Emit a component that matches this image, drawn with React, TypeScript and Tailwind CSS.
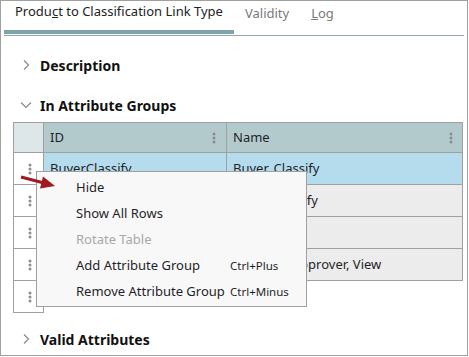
import React from "react"

const font = { fontFamily: '"Noto Sans", "Open Sans", sans-serif' }

function Dots() {
  return (
    <svg width="4" height="12" viewBox="0 0 4 12">
      <circle cx="2" cy="2" r="1.5" fill="#8c8c8c" />
      <circle cx="2" cy="6" r="1.5" fill="#8c8c8c" />
      <circle cx="2" cy="10" r="1.5" fill="#8c8c8c" />
    </svg>
  )
}

function ChevronRight() {
  return (
    <svg width="8" height="12" viewBox="0 0 8 12">
      <path d="M2 1.5 L6.5 6 L2 10.5" stroke="#8a8a8a" strokeWidth="1.2" fill="none" />
    </svg>
  )
}

function ChevronDown() {
  return (
    <svg width="12" height="8" viewBox="0 0 12 8">
      <path d="M1 1.5 L6 6.5 L11 1.5" stroke="#8a8a8a" strokeWidth="1.2" fill="none" />
    </svg>
  )
}

const rows = [
  { id: "BuyerClassify", name: "Buyer, Classify", selected: true },
  { id: "OwnerClassify", name: "Buyer Classify", selected: false },
  { id: "BuyerView", name: "Buyer, View", selected: false },
  { id: "CategoryApproverView", name: "Category Approver, View", selected: false },
]

const menu = [
  { label: "Hide" },
  { label: "Show All Rows" },
  { label: "Rotate Table", disabled: true },
  { label: "Add Attribute Group", shortcut: "Ctrl+Plus" },
  { label: "Remove Attribute Group", shortcut: "Ctrl+Minus" },
]

export default function App() {
  return (
    <div className="h-[357px] w-[469px] bg-white" style={font}>
      <div className="h-[356px] w-[468px] border border-[#a0a0a0] text-[13px]">
        {/* tabs */}
        <div className="mx-[3px] flex border-b border-[#8aa9b0] pb-px">
          <div className="flex h-[33px] items-center border-b-4 border-[#7fa3ab] px-[11px] pb-[7px] text-[#222]">
            <span>
              Produ<span className="underline">c</span>t to Classification Link Type
            </span>
          </div>
          <div className="flex h-[33px] items-center px-[11px] pb-[7px] text-[#7a7a7a]">Validity</div>
          <div className="flex h-[33px] items-center px-[11px] pb-[7px] text-[#7a7a7a]">
            <span>
              <span className="underline">L</span>og
            </span>
          </div>
        </div>

        {/* sections */}
        <div className="flex flex-col">
          <div className="mt-[19px] flex h-[20px] items-center">
            <div className="flex w-[39px] justify-end pr-[10px]">
              <ChevronRight />
            </div>
            <span className="text-[14px] font-bold text-[#111]">Description</span>
          </div>

          <div className="mt-[20px] flex h-[20px] items-center">
            <div className="flex w-[39px] justify-end pr-[8px]">
              <ChevronDown />
            </div>
            <span className="text-[14px] font-bold text-[#111]">In Attribute Groups</span>
          </div>

          {/* table */}
          <div className="relative ml-[12px] mt-[7px] flex items-start">
            <div className="flex w-[31px] flex-col border-l border-t border-[#a0a0a0]">
              <div className="h-[30px] border-b border-r border-[#a0a0a0] bg-[#dde6e8]" />
              {[0, 1, 2, 3, 4].map((i) => (
                <div
                  key={i}
                  className="flex h-[32px] items-center justify-center border-b border-r border-[#a0a0a0] bg-white pl-[3px]"
                >
                  <Dots />
                </div>
              ))}
            </div>
            <div className="grid grid-cols-[183px_236px] border-t border-[#a0a0a0] text-[#1f1f2a]">
              <div className="flex h-[30px] items-center justify-between border-b border-r border-[#a0a0a0] bg-[#b3cacd] pl-[6px] pr-[10px]">
                <span>ID</span>
                <Dots />
              </div>
              <div className="flex h-[30px] items-center justify-between border-b border-r border-[#a0a0a0] bg-[#b3cacd] pl-[6px] pr-[9px]">
                <span>Name</span>
                <Dots />
              </div>
              {rows.map((r) => (
                <React.Fragment key={r.id}>
                  <div
                    className={`flex h-[32px] items-center border-b border-r border-[#a0a0a0] pl-[6px] ${
                      r.selected ? "bg-[#b5dced]" : "bg-[#ececec]"
                    }`}
                  >
                    {r.id}
                  </div>
                  <div
                    className={`flex h-[32px] items-center border-b border-r border-[#a0a0a0] pl-[6px] ${
                      r.selected ? "bg-[#b5dced]" : "bg-[#ececec]"
                    }`}
                  >
                    {r.name}
                  </div>
                </React.Fragment>
              ))}
            </div>

            {/* context menu */}
            <div className="absolute left-[23px] top-[49px] flex h-[136px] w-[271px] flex-col border border-[#a0a0a0] bg-[#f8f8f8] pt-[3px]">
              {menu.map((m) => (
                <div key={m.label} className="flex h-[26px] items-center pl-[39px]">
                  <span className={`w-[154px] whitespace-nowrap ${m.disabled ? "text-[#a8a8a8]" : "text-[#1f1f2a]"}`}>
                    {m.label}
                  </span>
                  {m.shortcut && <span className="text-[11.5px] text-[#1f1f2a]">{m.shortcut}</span>}
                </div>
              ))}
            </div>

            {/* red arrow */}
            <svg className="absolute left-[3px] top-[48px]" width="44" height="22" viewBox="0 0 44 22">
              <line x1="5" y1="7" x2="27" y2="12.8" stroke="#9e1b21" strokeWidth="3" />
              <polygon points="39,16 24,18.5 27,6.5" fill="#9e1b21" />
            </svg>
          </div>

          <div className="mt-[16px] flex h-[20px] items-center">
            <div className="flex w-[39px] justify-end pr-[10px]">
              <ChevronRight />
            </div>
            <span className="text-[14px] font-bold text-[#111]">Valid Attributes</span>
          </div>
        </div>
      </div>
    </div>
  )
}
